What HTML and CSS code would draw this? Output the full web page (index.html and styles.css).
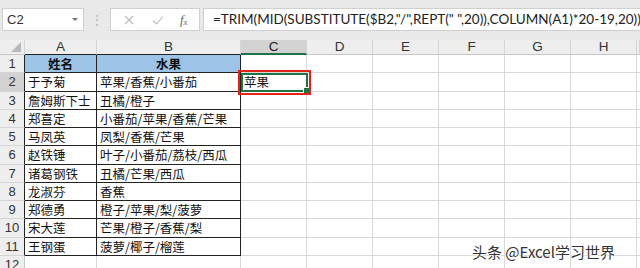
FILE: index.html
```html
<!DOCTYPE html>
<html>
<head>
<meta charset="utf-8">
<link rel="stylesheet" href="styles.css">
</head>
<body>
<div class="app">
  <div class="toolbar">
    <div class="namebox"><span class="nb-text">C2</span><span class="nb-arrow"></span></div>
    <div class="grip">⋮</div>
    <div class="fxbtns">
      <svg class="ic" width="14" height="14" viewBox="0 0 14 14"><path d="M3 3 L11 11 M11 3 L3 11" stroke="#bcbcbc" stroke-width="1.1" fill="none"/></svg>
      <svg class="ic" width="14" height="14" viewBox="0 0 14 14"><path d="M2 7.5 L5.5 11 L12 3.5" stroke="#bcbcbc" stroke-width="1.1" fill="none"/></svg>
      <span class="fx"><i>f</i><sub>x</sub></span>
    </div>
    <div class="formula">=TRIM(MID(SUBSTITUTE($B2,"/",REPT(" ",20)),COLUMN(A1)*20-19,20))</div>
  </div>
  <div class="sheet">
    <div class="ch corner"><span class="tri"></span></div>
    <div class="ch ta-h">A</div><div class="ch tb">B</div><div class="ch act">C</div><div class="ch">D</div><div class="ch">E</div><div class="ch">F</div><div class="ch">G</div><div class="ch">H</div><div class="ch"></div>

    <div class="rh tr">1</div><div class="c t ta th">姓名</div><div class="c t th">水果</div><div class="c"></div><div class="c"></div><div class="c"></div><div class="c"></div><div class="c"></div><div class="c"></div><div class="c"></div>
    <div class="rh tr ract">2</div><div class="c t ta">于予菊</div><div class="c t">苹果/香蕉/小番茄</div><div class="c cur">苹果</div><div class="c"></div><div class="c"></div><div class="c"></div><div class="c"></div><div class="c"></div><div class="c"></div>
    <div class="rh tr">3</div><div class="c t ta">詹姆斯下士</div><div class="c t">丑橘/橙子</div><div class="c"></div><div class="c"></div><div class="c"></div><div class="c"></div><div class="c"></div><div class="c"></div><div class="c"></div>
    <div class="rh tr">4</div><div class="c t ta">郑喜定</div><div class="c t">小番茄/苹果/香蕉/芒果</div><div class="c"></div><div class="c"></div><div class="c"></div><div class="c"></div><div class="c"></div><div class="c"></div><div class="c"></div>
    <div class="rh tr">5</div><div class="c t ta">马凤英</div><div class="c t">凤梨/香蕉/芒果</div><div class="c"></div><div class="c"></div><div class="c"></div><div class="c"></div><div class="c"></div><div class="c"></div><div class="c"></div>
    <div class="rh tr">6</div><div class="c t ta">赵铁锤</div><div class="c t">叶子/小番茄/荔枝/西瓜</div><div class="c"></div><div class="c"></div><div class="c"></div><div class="c"></div><div class="c"></div><div class="c"></div><div class="c"></div>
    <div class="rh tr">7</div><div class="c t ta">诸葛钢铁</div><div class="c t">丑橘/芒果/西瓜</div><div class="c"></div><div class="c"></div><div class="c"></div><div class="c"></div><div class="c"></div><div class="c"></div><div class="c"></div>
    <div class="rh tr">8</div><div class="c t ta">龙淑芬</div><div class="c t">香蕉</div><div class="c"></div><div class="c"></div><div class="c"></div><div class="c"></div><div class="c"></div><div class="c"></div><div class="c"></div>
    <div class="rh tr">9</div><div class="c t ta">郑德勇</div><div class="c t">橙子/苹果/梨/菠萝</div><div class="c"></div><div class="c"></div><div class="c"></div><div class="c"></div><div class="c"></div><div class="c"></div><div class="c"></div>
    <div class="rh tr">10</div><div class="c t ta">宋大莲</div><div class="c t">芒果/橙子/香蕉/梨</div><div class="c"></div><div class="c"></div><div class="c"></div><div class="c"></div><div class="c"></div><div class="c"></div><div class="c"></div>
    <div class="rh tr">11</div><div class="c t ta">王钢蛋</div><div class="c t">菠萝/椰子/榴莲</div><div class="c"></div><div class="c"></div><div class="c"></div><div class="c"></div><div class="c"></div><div class="c"></div><div class="c"></div>
    <div class="rh">12</div><div class="c"></div><div class="c"></div><div class="c"></div><div class="c"></div><div class="c"></div><div class="c"></div><div class="c"></div><div class="c"></div><div class="c"></div>
  </div>
  <div class="annot"></div>
  <div class="watermark">头条 @Excel学习世界</div>
</div>
</body>
</html>
```
FILE: styles.css
```css
html, body { margin: 0; padding: 0; }
body { width: 640px; height: 268px; overflow: hidden; background: #fff; font-family: "Liberation Sans", "Noto Sans CJK SC", sans-serif; }
.app { position: relative; width: 640px; height: 268px; overflow: hidden; }

.toolbar { height: 40px; background: #e9e9e9; display: flex; align-items: flex-start; padding-top: 8px; box-sizing: border-box; }
.namebox { margin-left: 2px; width: 82px; height: 23px; box-sizing: border-box; background: #fff; border: 1px solid #d0d0d0; display: flex; align-items: center; justify-content: space-between; padding: 0 5px 0 4px; }
.nb-text { font-family: "Liberation Sans", sans-serif; font-size: 13px; color: #333; }
.nb-arrow { width: 0; height: 0; border-left: 3px solid transparent; border-right: 3px solid transparent; border-top: 3px solid #777; }
.grip { width: 26px; height: 23px; display: flex; align-items: center; justify-content: center; color: #b0b0b0; font-size: 12px; line-height: 1; }
.fxbtns { width: 90px; height: 23px; box-sizing: border-box; background: #fff; border: 1px solid #d0d0d0; display: flex; align-items: center; justify-content: space-around; padding: 0 4px; }
.fx { font-family: "Liberation Serif", serif; color: #666; font-size: 13px; }
.fx sub { font-size: 9px; font-style: italic; vertical-align: -1px; }
.formula { margin-left: 3px; flex: 1; height: 23px; box-sizing: border-box; background: #fff; border: 1px solid #d0d0d0; border-right: none; font-family: "Lato", "Liberation Sans", sans-serif; font-size: 13.5px; color: #222; padding-left: 9px; line-height: 21px; white-space: nowrap; overflow: hidden; }

.sheet { display: grid; grid-template-columns: 25px 72px 144px 66px 66px 66px 66px 66px 66px 3px; grid-template-rows: 15px repeat(11, 18.27px) 20px; }
.ch { background: #eeeeee; border-right: 1px solid #d5d5d5; border-bottom: 1px solid #c8c8c8; box-sizing: border-box; font-size: 13.5px; color: #333; text-align: center; line-height: 14px; }
.ch.act { background: #d2d2d2; border-bottom: 2px solid #217346; color: #222; }
.ch.ta-h, .ch.tb { border-bottom-color: #222; }
.corner { position: relative; }
.tri { position: absolute; right: 3px; bottom: 2px; width: 0; height: 0; border-left: 10px solid transparent; border-bottom: 10px solid #b8b8b8; }
.rh { background: #eeeeee; border-right: 1px solid #c8c8c8; border-bottom: 1px solid #d5d5d5; box-sizing: border-box; font-size: 13px; color: #333; text-align: center; line-height: 18px; }
.rh.tr { border-right-color: #222; }
.rh.ract { background: #d2d2d2; }
.c { border-right: 1px solid #d9d9d9; border-bottom: 1px solid #d9d9d9; box-sizing: border-box; font-family: "Noto Sans CJK SC", sans-serif; font-size: 12.5px; color: #111; padding-left: 3px; line-height: 17px; white-space: nowrap; overflow: hidden; }
.c.t { border-right-color: #222; border-bottom-color: #222; }
.c.th { background: #9dc3e6; font-weight: bold; text-align: center; padding-left: 0; }
.c.cur { position: relative; }

.annot { position: absolute; left: 238px; top: 70px; width: 73px; height: 25px; box-sizing: border-box; border: 2px solid #e2231a; }
.annot::before { content: ""; position: absolute; left: 1px; top: 1px; right: 1px; bottom: 1px; border: 2px solid #217346; }
.annot::after { content: ""; position: absolute; right: 0px; bottom: 0px; width: 5px; height: 5px; background: #217346; border-left: 1px solid #fff; border-top: 1px solid #fff; }
.watermark { position: absolute; left: 472px; top: 241px; font-family: "Noto Sans CJK SC", sans-serif; font-size: 15px; color: #333; text-shadow: 0 0 2px #fff, 0 0 2px #fff, 1px 1px 1px #fff; white-space: nowrap; }
```
